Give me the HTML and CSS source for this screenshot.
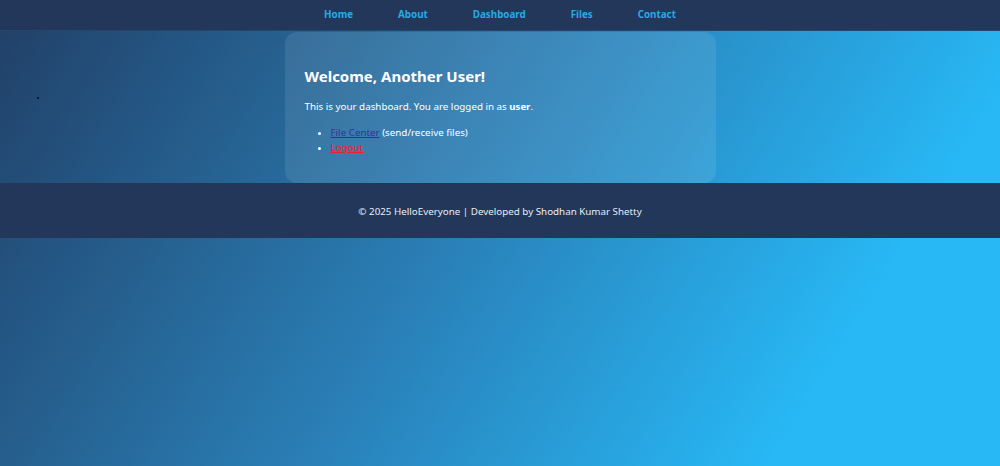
FILE: index.html
```html
<!DOCTYPE html>
<html lang="en">
<head>
<meta charset="utf-8">
<title>Dashboard</title>
<link rel="stylesheet" href="styles.css">
</head>
<body>
<nav class="topnav">
  <a href="#" class="nav-link">Home</a>
  <a href="#" class="nav-link">About</a>
  <a href="#" class="nav-link">Dashboard</a>
  <a href="#" class="nav-link">Files</a>
  <a href="#" class="nav-link">Contact</a>
</nav>
<main class="main">
  <span class="speck"></span>
  <section class="card">
    <h2 class="card-title">Welcome, Another User!</h2>
    <p class="card-text">This is your dashboard. You are logged in as <strong>user</strong>.</p>
    <ul class="card-list">
      <li><a href="#" class="link-files">File Center</a> (send/receive files)</li>
      <li><a href="#" class="link-logout">Logout</a></li>
    </ul>
  </section>
</main>
<footer class="footer">© 2025 HelloEveryone | Developed by Shodhan Kumar Shetty</footer>
</body>
</html>
```
FILE: styles.css
```css
html {
  min-height: 100%;
  background: linear-gradient(122deg, #213f66 0%, #2a82ba 48%, #27b8f5 82%, #27b8f5 100%);
}
body {
  margin: 0;
  min-height: 100vh;
  font-family: "Noto Sans", "Open Sans", sans-serif;
  color: #fff;
}
.topnav {
  height: 31px;
  background: #22375a;
  display: flex;
  justify-content: center;
  align-items: center;
  gap: 45px;
  border-bottom: 1px solid #23486e;
  box-sizing: border-box;
  padding-bottom: 2px;
}
.nav-link {
  color: #29a9e6;
  font-weight: 700;
  font-size: 9.8px;
  text-decoration: none;
}
.main {
  position: relative;
  padding-top: 1px;
}
.speck {
  position: absolute;
  left: 37px;
  top: 66px;
  width: 2px;
  height: 2px;
  background: #0b1830;
}
.card {
  width: 431px;
  margin: 0 auto;
  box-sizing: border-box;
  background: rgba(255, 255, 255, 0.09);
  border-radius: 12px;
  padding: 20px 20px 20px 20px;
  height: 151px;
}
.card-title {
  margin: 14px 0 14px;
  font-size: 15px;
  font-weight: 700;
  line-height: 20px;
}
.card-text {
  margin: 0 0 11px;
  font-size: 9.8px;
  line-height: 14px;
}
.card-text strong {
  font-size: 9.6px;
}
.card-list {
  margin: 0;
  padding-left: 26px;
  font-size: 9.8px;
  line-height: 15px;
}
.link-files {
  color: #3a2f9a;
}
.link-logout {
  color: #f0202a;
}
.footer {
  background: #22375a;
  height: 55px;
  display: flex;
  align-items: center;
  justify-content: center;
  font-size: 9.8px;
  color: #e8edf3;
  padding-top: 2px;
  box-sizing: border-box;
}
```
